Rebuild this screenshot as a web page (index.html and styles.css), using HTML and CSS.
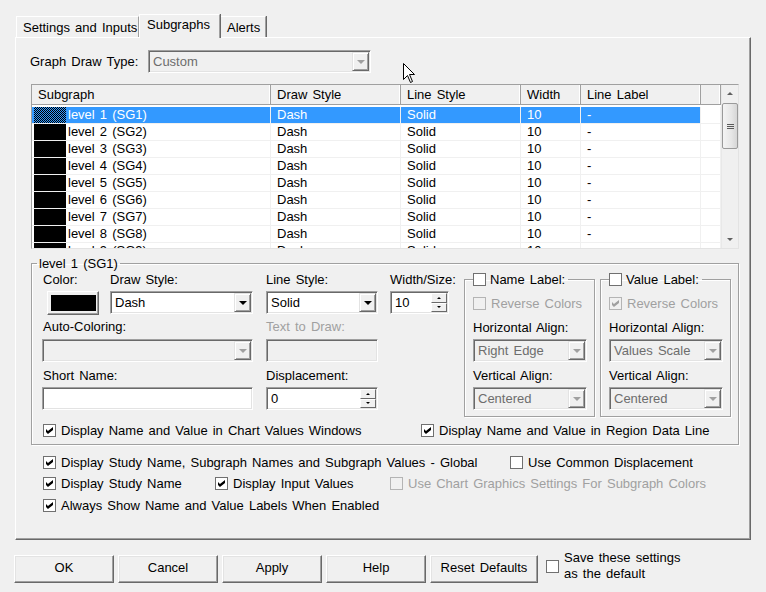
FILE: index.html
```html
<!DOCTYPE html>
<html lang="en">
<head>
    <meta charset="UTF-8">
    <title>Subgraphs</title>
    <link rel="stylesheet" href="styles.css">
</head>
<body>
    <div class="dialog">
        <div class="tabs">
            <div class="tab tab-settings">Settings and Inputs</div>
            <div class="tab tab-active">Subgraphs</div>
            <div class="tab tab-alerts">Alerts</div>
        </div>

        <div class="panel">
            <div class="draw-type">
                <span class="draw-type-label">Graph Draw Type:</span>
                <div class="combo disabled w-draw-type">
                    <span class="combo-text">Custom</span>
                    <span class="combo-btn"><i class="arrow-down"></i></span>
                </div>
            </div>

            <!-- subgraph list -->
            <div class="listview">
                <div class="lv-main">
                    <div class="lv-head">
                        <div class="hc">Subgraph</div>
                        <div class="hc">Draw Style</div>
                        <div class="hc">Line Style</div>
                        <div class="hc">Width</div>
                        <div class="hc">Line Label</div>
                        <div class="hc hc-empty"></div>
                    </div>
                    <div class="lv-row selected">
                        <div class="cell-name"><span class="swatch"></span>level 1 (SG1)</div>
                        <div>Dash</div><div>Solid</div><div>10</div><div>-</div><div class="cell-empty"></div>
                    </div>
                    <div class="lv-row">
                        <div class="cell-name"><span class="swatch"></span>level 2 (SG2)</div>
                        <div>Dash</div><div>Solid</div><div>10</div><div>-</div><div class="cell-empty"></div>
                    </div>
                    <div class="lv-row">
                        <div class="cell-name"><span class="swatch"></span>level 3 (SG3)</div>
                        <div>Dash</div><div>Solid</div><div>10</div><div>-</div><div class="cell-empty"></div>
                    </div>
                    <div class="lv-row">
                        <div class="cell-name"><span class="swatch"></span>level 4 (SG4)</div>
                        <div>Dash</div><div>Solid</div><div>10</div><div>-</div><div class="cell-empty"></div>
                    </div>
                    <div class="lv-row">
                        <div class="cell-name"><span class="swatch"></span>level 5 (SG5)</div>
                        <div>Dash</div><div>Solid</div><div>10</div><div>-</div><div class="cell-empty"></div>
                    </div>
                    <div class="lv-row">
                        <div class="cell-name"><span class="swatch"></span>level 6 (SG6)</div>
                        <div>Dash</div><div>Solid</div><div>10</div><div>-</div><div class="cell-empty"></div>
                    </div>
                    <div class="lv-row">
                        <div class="cell-name"><span class="swatch"></span>level 7 (SG7)</div>
                        <div>Dash</div><div>Solid</div><div>10</div><div>-</div><div class="cell-empty"></div>
                    </div>
                    <div class="lv-row">
                        <div class="cell-name"><span class="swatch"></span>level 8 (SG8)</div>
                        <div>Dash</div><div>Solid</div><div>10</div><div>-</div><div class="cell-empty"></div>
                    </div>
                    <div class="lv-row">
                        <div class="cell-name"><span class="swatch"></span>level 9 (SG9)</div>
                        <div>Dash</div><div>Solid</div><div>10</div><div>-</div><div class="cell-empty"></div>
                    </div>
                </div>
                <div class="vscroll">
                    <div class="sb-btn"><i class="sb-up"></i></div>
                    <div class="sb-thumb"><span class="grip"></span></div>
                    <div class="sb-track"></div>
                    <div class="sb-btn"><i class="sb-down"></i></div>
                </div>
            </div>

            <!-- selected subgraph settings -->
            <fieldset class="group">
                <legend class="group-title">level 1 (SG1)</legend>
                <div class="group-top">
                    <div class="props">
                        <span class="lbl">Color:</span>
                        <span class="lbl">Draw Style:</span>
                        <span class="lbl">Line Style:</span>
                        <span class="lbl">Width/Size:</span>

                        <div class="color-btn"><span class="color-fill"></span></div>
                        <div class="combo w-draw">
                            <span class="combo-text">Dash</span>
                            <span class="combo-btn"><i class="arrow-down"></i></span>
                        </div>
                        <div class="combo w-line">
                            <span class="combo-text">Solid</span>
                            <span class="combo-btn"><i class="arrow-down"></i></span>
                        </div>
                        <div class="spin w-width">
                            <span class="spin-text">10</span>
                            <span class="spin-btns">
                                <span class="spin-btn"><i class="spin-up"></i></span>
                                <span class="spin-btn"><i class="spin-down"></i></span>
                            </span>
                        </div>

                        <span class="lbl lbl-row3 span2">Auto-Coloring:</span>
                        <span class="lbl lbl-row3 muted">Text to Draw:</span>
                        <span></span>

                        <div class="combo disabled w-wide span2">
                            <span class="combo-text"></span>
                            <span class="combo-btn"><i class="arrow-down"></i></span>
                        </div>
                        <div class="edit disabled w-line"></div>
                        <span></span>

                        <span class="lbl lbl-row5 span2">Short Name:</span>
                        <span class="lbl lbl-row5">Displacement:</span>
                        <span></span>

                        <div class="edit w-wide span2"></div>
                        <div class="spin w-line">
                            <span class="spin-text">0</span>
                            <span class="spin-btns">
                                <span class="spin-btn"><i class="spin-up"></i></span>
                                <span class="spin-btn"><i class="spin-down"></i></span>
                            </span>
                        </div>
                        <span></span>
                    </div>

                    <fieldset class="subbox">
                        <legend class="sub-title"><span class="cb"></span>Name Label:</legend>
                        <div class="check sub-check muted"><span class="cb disabled"></span>Reverse Colors</div>
                        <div class="sub-lbl">Horizontal Align:</div>
                        <div class="combo disabled w-sub">
                            <span class="combo-text">Right Edge</span>
                            <span class="combo-btn"><i class="arrow-down"></i></span>
                        </div>
                        <div class="sub-lbl sub-lbl-v">Vertical Align:</div>
                        <div class="combo disabled w-sub">
                            <span class="combo-text">Centered</span>
                            <span class="combo-btn"><i class="arrow-down"></i></span>
                        </div>
                    </fieldset>

                    <fieldset class="subbox subbox-value">
                        <legend class="sub-title"><span class="cb"></span>Value Label:</legend>
                        <div class="check sub-check muted"><span class="cb disabled checked"></span>Reverse Colors</div>
                        <div class="sub-lbl">Horizontal Align:</div>
                        <div class="combo disabled w-sub">
                            <span class="combo-text">Values Scale</span>
                            <span class="combo-btn"><i class="arrow-down"></i></span>
                        </div>
                        <div class="sub-lbl sub-lbl-v">Vertical Align:</div>
                        <div class="combo disabled w-sub">
                            <span class="combo-text">Centered</span>
                            <span class="combo-btn"><i class="arrow-down"></i></span>
                        </div>
                    </fieldset>
                </div>

                <div class="group-checks">
                    <div class="check w-chart-values"><span class="cb checked"></span>Display Name and Value in Chart Values Windows</div>
                    <div class="check"><span class="cb checked"></span>Display Name and Value in Region Data Line</div>
                </div>
            </fieldset>

            <!-- global options -->
            <div class="opt-row opt-row-1">
                <div class="check w-opt-global"><span class="cb checked"></span>Display Study Name, Subgraph Names and Subgraph Values - Global</div>
                <div class="check"><span class="cb"></span>Use Common Displacement</div>
            </div>
            <div class="opt-row opt-row-2">
                <div class="check w-opt-study"><span class="cb checked"></span>Display Study Name</div>
                <div class="check w-opt-inputs"><span class="cb checked"></span>Display Input Values</div>
                <div class="check muted"><span class="cb disabled"></span>Use Chart Graphics Settings For Subgraph Colors</div>
            </div>
            <div class="opt-row opt-row-3">
                <div class="check"><span class="cb checked"></span>Always Show Name and Value Labels When Enabled</div>
            </div>
        </div>

        <div class="buttons">
            <button class="btn">OK</button>
            <button class="btn">Cancel</button>
            <button class="btn">Apply</button>
            <button class="btn">Help</button>
            <button class="btn btn-reset">Reset Defaults</button>
            <div class="save-default">
                <span class="cb"></span>
                <span class="save-text">Save these settings<br>as the default</span>
            </div>
        </div>
    </div>

    <svg class="mouse-cursor" width="13" height="21" viewBox="0 0 13 21">
        <path d="M0.5 0.5 L0.5 16.5 L4.5 12.5 L7.5 19.5 L9.5 18.5 L6.5 11.5 L11.5 11.5 Z" fill="#fff" stroke="#000" stroke-width="1"/>
    </svg>
</body>
</html>
```

FILE: styles.css
```css
* {
    margin: 0;
    padding: 0;
    box-sizing: border-box;
}

body {
    background-color: #f0f0f0;
    font-family: "Liberation Sans", Arial, sans-serif;
    font-size: 13px;
    word-spacing: 1.5px;
    color: #000;
    width: 766px;
    height: 592px;
    overflow: hidden;
    position: relative;
}

.dialog {
    padding: 14px 0 0 15px;
}

/* tabs */
.tabs {
    display: flex;
    align-items: flex-end;
    height: 23px;
    padding-left: 1px;
}

.tab {
    height: 21px;
    padding: 3px 0 0 6px;
    line-height: 15px;
    background-color: #f0f0f0;
    border-top: 1px solid #fff;
    border-left: 1px solid #fff;
    border-right: 1px solid #a0a0a0;
    white-space: nowrap;
}

.tab-settings { width: 123px; }
.tab-alerts { width: 46px; box-shadow: 1px 0 0 #696969; }

.tab-active {
    width: 81px;
    height: 24px;
    margin-bottom: -1px;
    padding: 2px 0 0 7px;
    position: relative;
    z-index: 1;
    box-shadow: 1px 0 0 #696969;
}

.panel {
    width: 736px;
    height: 503px;
    border: 1px solid;
    border-color: #fff #696969 #696969 #fff;
    box-shadow: inset -1px -1px 0 #a0a0a0;
    padding: 12px 0 0 14px;
}

/* graph draw type */
.draw-type {
    display: flex;
    align-items: center;
    height: 23px;
}

.draw-type-label {
    width: 118px;
}

/* sunken controls */
.combo,
.edit,
.spin {
    height: 23px;
    display: flex;
    background-color: #fff;
    border: 1px solid;
    border-color: #a0a0a0 #fff #fff #a0a0a0;
    box-shadow: inset 1px 1px 0 #696969, inset -1px -1px 0 #e3e3e3;
    padding: 1px;
}

.combo.disabled,
.edit.disabled {
    background-color: #f0f0f0;
    color: #6d6d6d;
}

.combo-text,
.spin-text {
    flex: 1;
    padding-left: 3px;
    line-height: 19px;
    white-space: nowrap;
    overflow: hidden;
}

.combo-btn {
    width: 17px;
    height: 19px;
    display: flex;
    justify-content: center;
    align-items: center;
    background-color: #f0f0f0;
    border: 1px solid;
    border-color: #e3e3e3 #696969 #696969 #e3e3e3;
    box-shadow: inset 1px 1px 0 #fff, inset -1px -1px 0 #a0a0a0;
}

.arrow-down {
    width: 0;
    height: 0;
    border-left: 4px solid transparent;
    border-right: 4px solid transparent;
    border-top: 4px solid #000;
    margin-top: 1px;
}

.disabled .arrow-down {
    border-top-color: #a0a0a0;
}

.spin-btns {
    width: 16px;
    display: flex;
    flex-direction: column;
}

.spin-btn {
    flex: 1;
    display: flex;
    justify-content: center;
    align-items: center;
    background-color: #f0f0f0;
    border: 1px solid;
    border-color: #fff #696969 #696969 #fff;
}

.spin-up {
    border-left: 2px solid transparent;
    border-right: 2px solid transparent;
    border-bottom: 2px solid #000;
}

.spin-down {
    border-left: 2px solid transparent;
    border-right: 2px solid transparent;
    border-top: 2px solid #000;
}

.w-draw-type { width: 223px; }
.w-draw { width: 143px; }
.w-line { width: 112px; }
.w-width { width: 59px; }
.w-wide { width: 211px; margin-left: -1px; }
.w-sub { width: 114px; }

/* list view */
.listview {
    margin: 11px 0 0 1px;
    width: 708px;
    height: 165px;
    display: flex;
    background-color: #fff;
    border: 1px solid;
    border-color: #a0a0a0 #e3e3e3 #e3e3e3 #a0a0a0;
    overflow: hidden;
}

.lv-main {
    width: 689px;
    overflow: hidden;
}

.lv-head,
.lv-row {
    display: grid;
    grid-template-columns: 239px 130px 120px 60px 120px 20px;
}

.lv-head {
    height: 22px;
    padding-bottom: 2px;
}

.hc {
    background-color: #f0f0f0;
    border-right: 1px solid #a0a0a0;
    border-bottom: 1px solid #a0a0a0;
    box-shadow: inset -1px 0 0 #fff;
    padding-left: 6px;
    line-height: 19px;
}

.lv-row {
    height: 17px;
}

.lv-row > div {
    border-right: 1px solid #f0f0f0;
    border-bottom: 1px solid #f0f0f0;
    padding-left: 6px;
    line-height: 16px;
    white-space: nowrap;
}

.lv-row > .cell-name {
    display: flex;
    padding-left: 2px;
}

.swatch {
    width: 32px;
    height: 16px;
    margin-right: 2px;
    background-color: #000;
}

.lv-row.selected > div:not(.cell-empty) {
    background-color: #3399ff;
    color: #fff;
}

.lv-row.selected .swatch {
    background: repeating-conic-gradient(#000 0 25%, #3399ff 0 50%) 0 0 / 2px 2px;
}

.vscroll {
    width: 17px;
    display: flex;
    flex-direction: column;
    background-color: #f0f0f0;
    border-left: 1px solid #e8e8e8;
}

.sb-btn {
    height: 17px;
    display: flex;
    justify-content: center;
    align-items: center;
}

.sb-up {
    border-left: 3px solid transparent;
    border-right: 3px solid transparent;
    border-bottom: 3px solid #606060;
}

.sb-down {
    border-left: 3px solid transparent;
    border-right: 3px solid transparent;
    border-top: 3px solid #606060;
}

.sb-thumb {
    height: 46px;
    margin: 1px 0 0 0;
    border: 1px solid #9a9a9a;
    border-radius: 2px;
    background: linear-gradient(to right, #f4f4f4, #e6e6e6 60%, #d6d6d6);
    display: flex;
    justify-content: center;
    align-items: center;
}

.grip {
    width: 7px;
    height: 5px;
    background: repeating-linear-gradient(to bottom, #5a5a5a 0 1px, transparent 1px 2px);
}

.sb-track {
    flex: 1;
}

/* group boxes */
.group {
    margin: 7px 0 0 1px;
    width: 708px;
    border: 1px solid #a0a0a0;
    box-shadow: inset 1px 1px 0 #fff, 1px 1px 0 #fff;
    padding: 1px 0 6px 5px;
}

.group-title {
    padding: 0 2px;
    line-height: 15px;
}

.group-top {
    display: flex;
    align-items: flex-start;
}

.props {
    display: grid;
    grid-template-columns: 67px 156px 124px 59px;
    grid-template-rows: 19px 24px 24px 23px 25px 23px;
    margin-left: 6px;
}

.lbl {
    line-height: 15px;
    white-space: nowrap;
}

.lbl-row3 { padding-top: 4px; }
.lbl-row5 { padding-top: 6px; }

.span2 {
    grid-column: span 2;
}

.muted {
    color: #a0a0a0;
}

.color-btn {
    width: 52px;
    height: 24px;
    margin-left: 4px;
    padding: 3px 0 0 3px;
    background-color: #f0f0f0;
    border: 1px solid;
    border-color: #fff #696969 #696969 #fff;
    box-shadow: inset -1px -1px 0 #a0a0a0;
}

.color-fill {
    display: block;
    width: 45px;
    height: 16px;
    background-color: #000;
}

.subbox {
    margin-left: 15px;
    width: 131px;
    border: 1px solid #a0a0a0;
    box-shadow: inset 1px 1px 0 #fff, 1px 1px 0 #fff;
    padding: 0 0 6px 8px;
}

.subbox-value {
    margin-left: 5px;
}

.sub-title {
    display: flex;
    align-items: center;
    line-height: 15px;
    padding-right: 3px;
}

.sub-title .cb {
    margin-right: 4px;
}

.sub-check {
    margin-top: 9px;
}

.sub-lbl {
    margin: 9px 0 4px;
    line-height: 15px;
}

.sub-lbl-v {
    margin-top: 6px;
}

/* checkboxes */
.check {
    display: flex;
    align-items: center;
    line-height: 15px;
    white-space: nowrap;
}

.cb {
    width: 13px;
    height: 13px;
    flex-shrink: 0;
    margin-right: 5px;
    background-color: #fff;
    border: 1px solid #707070;
    position: relative;
}

.cb.disabled {
    background-color: #f0f0f0;
    border-color: #b4b4b4;
}

.cb.checked::after {
    content: "";
    position: absolute;
    left: 2px;
    top: 2px;
    width: 7px;
    height: 7px;
    background-color: #000;
    clip-path: polygon(0 28%, 28% 57%, 100% 0, 100% 43%, 28% 100%, 0 72%);
}

.cb.disabled.checked::after {
    background-color: #a0a0a0;
}

.group-checks {
    display: flex;
    margin: 6px 0 0 6px;
    height: 15px;
}

.w-chart-values { width: 378px; }

.opt-row {
    display: flex;
    height: 15px;
    margin-left: 13px;
}

.opt-row-1 { margin-top: 10px; }
.opt-row-2 { margin-top: 6px; }
.opt-row-3 { margin-top: 7px; }

.w-opt-global { width: 467px; }
.w-opt-study { width: 172px; }
.w-opt-inputs { width: 175px; }

/* dialog buttons */
.buttons {
    display: flex;
    align-items: center;
    gap: 4px;
    margin: 10px 0 0 -1px;
}

.btn {
    width: 100px;
    height: 28px;
    padding-bottom: 3px;
    font-family: inherit;
    font-size: 13px;
    word-spacing: inherit;
    color: #000;
    background-color: #f0f0f0;
    border: 1px solid;
    border-color: #fff #696969 #696969 #fff;
    box-shadow: inset -1px -1px 0 #a0a0a0, inset 1px 1px 0 #e3e3e3;
}

.btn-reset {
    width: 108px;
}

.save-default {
    display: flex;
    align-items: center;
    margin: 0 0 6px 4px;
}

.save-text {
    line-height: 16px;
}

.mouse-cursor {
    position: absolute;
    left: 403px;
    top: 63px;
}
```
